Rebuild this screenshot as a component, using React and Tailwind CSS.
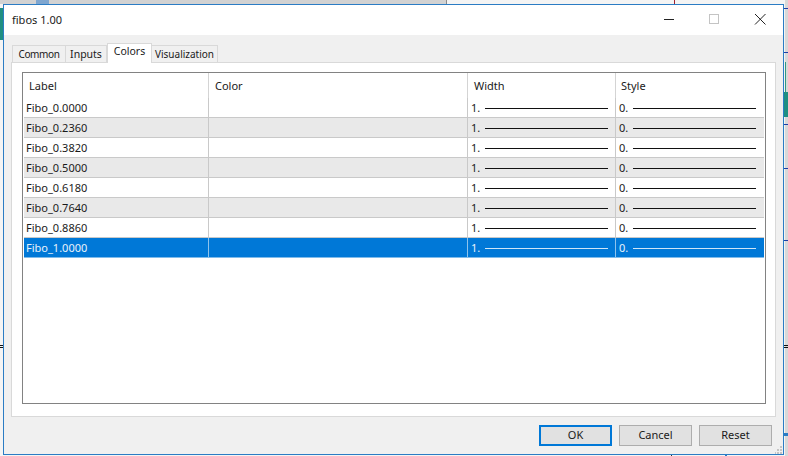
const rows = ["Fibo_0.0000","Fibo_0.2360","Fibo_0.3820","Fibo_0.5000","Fibo_0.6180","Fibo_0.7640","Fibo_0.8860","Fibo_1.0000"];

function Tab({ children, active, w }) {
  return (
    <div className={active
      ? "relative z-10 -mb-px h-[20px] flex items-start justify-center bg-white border border-b-0 border-[#d9d9d9] text-[10.5px] " + w
      : "mt-[2px] h-[18px] flex items-center justify-center bg-[#f0f0f0] border border-b-0 border-[#d9d9d9] -ml-px " + w}>
      {children}
    </div>
  );
}

function Row({ label, i }) {
  const sel = i === 7;
  const alt = i % 2 === 1;
  const bg = sel ? "bg-[#0078d7] text-[#e8f2fb]" : alt ? "bg-[#e9e9e9] text-[#1a1a1a]" : "bg-white text-[#1a1a1a]";
  const line = sel ? "bg-[#cfe6f8]" : "bg-[#111111]";
  const divider = sel ? "border-[#8fc3ec]" : "border-[#c9c9c9]";
  const rowBorder = sel ? "border-[#7fbbea]" : "border-[#c9c9c9]";
  return (
    <div className={"flex h-[20px] border-b " + rowBorder + " " + bg}>
      <div className={"w-[185px] pl-[2px] pt-[1px] border-r flex items-center " + divider}>{label}</div>
      <div className={"w-[259px] border-r " + divider}></div>
      <div className={"w-[148px] pl-[3px] pr-[7px] pt-[1px] border-r flex items-center gap-[5px] " + divider}>
        <span>1.</span><div className={"h-[1px] flex-1 " + line}></div>
      </div>
      <div className="flex-1 pl-[3px] pr-[8px] pt-[1px] flex items-center gap-[5px]">
        <span>0.</span><div className={"h-[1px] flex-1 " + line}></div>
      </div>
    </div>
  );
}

function Btn({ children, def }) {
  return (
    <div className={def
      ? "w-[73px] h-[21px] flex items-center justify-center bg-[#e1e1e1] border-2 border-[#0078d7] text-[#1a1a1a]"
      : "w-[73px] h-[21px] flex items-center justify-center bg-[#e1e1e1] border border-[#adadad] text-[#1a1a1a]"}>
      {children}
    </div>
  );
}

const backdropBits = [
  { k: "a", c: "left-0 top-0 w-[446px] h-[4px] bg-[#d2d2d2]" },
  { k: "b", c: "left-[446px] top-0 w-[1px] h-[4px] bg-[#8a8a8a]" },
  { k: "c", c: "left-[36px] top-0 w-[13px] h-[4px] bg-[#7fa6cf]" },
  { k: "d", c: "left-[674px] top-0 w-[1px] h-[4px] bg-[#a02030]" },
  { k: "e", c: "left-0 top-[8px] w-[3px] h-[32px] bg-[#1f8f82]" },
  { k: "f", c: "left-[785px] top-0 w-[3px] h-[456px] bg-[#d8d8d8]" },
  { k: "g", c: "left-[784px] top-[92px] w-[4px] h-[25px] bg-[#1f8f82]" },
  { k: "h", c: "left-[785px] top-[62px] w-[1px] h-[30px] bg-[#2f9a82]" },
  { k: "i", c: "left-[784px] top-[8px] w-[4px] h-[1px] bg-[#1c3fa8]" },
  { k: "j", c: "left-[784px] top-[52px] w-[4px] h-[1px] bg-[#1c3fa8]" },
  { k: "k", c: "left-[784px] top-[124px] w-[4px] h-[1px] bg-[#1c3fa8]" },
  { k: "l", c: "left-[784px] top-[168px] w-[4px] h-[1px] bg-[#1c3fa8]" },
  { k: "m", c: "left-[784px] top-[240px] w-[4px] h-[1px] bg-[#1c3fa8]" },
  { k: "n", c: "left-[784px] top-[345px] w-[4px] h-[1px] bg-[#111111]" },
  { k: "o", c: "left-[784px] top-[347px] w-[4px] h-[1px] bg-[#111111]" },
  { k: "p", c: "left-0 top-[345px] w-[3px] h-[1px] bg-[#111111]" },
  { k: "q", c: "left-0 top-[347px] w-[3px] h-[1px] bg-[#111111]" },
  { k: "r", c: "left-[784px] top-[433px] w-[4px] h-[3px] bg-[#2b7cc4]" },
  { k: "s", c: "left-[671px] top-[455px] w-[1px] h-[1px] bg-[#333333]" },
  { k: "t", c: "left-[725px] top-[455px] w-[2px] h-[1px] bg-[#2b7cc4]" },
];

export default function App() {
  return (
    <div className="relative w-[788px] h-[456px] overflow-hidden bg-[#f4f4f4] pl-[3px] pr-[4px] pt-[4px] text-[11px] font-['Noto_Sans',sans-serif]">
      {backdropBits.map(b => <div key={b.k} className={"absolute " + b.c}></div>)}
      <div className="relative w-[781px] h-[451px] flex flex-col bg-[#f0f0f0] border border-[#2b7cc4]">
        <div className="h-[30px] shrink-0 bg-white flex items-center pl-[8px] text-[#1a1a1a]">
          <span className="flex-1">fibos 1.00</span>
          <svg width="120" height="30" viewBox="0 0 120 30" fill="none" className="mr-[2px]">
            <path d="M3 14.5H13" stroke="#222" strokeWidth="1" />
            <rect x="48.5" y="9.5" width="9" height="9" stroke="#c4c4c4" />
            <path d="M94 9L104.5 19.5M104.5 9L94 19.5" stroke="#222" strokeWidth="1" />
          </svg>
        </div>
        <div className="flex-1 flex flex-col px-[7px] pt-[8px]">
          <div className="flex pl-[2px] h-[19px] text-[#1a1a1a]">
            <Tab w="w-[54px] text-[10px] tracking-[-0.4px]">Common</Tab>
            <Tab w="w-[42px] text-[10.5px]">Inputs</Tab>
            <Tab active w="w-[45px]">Colors</Tab>
            <Tab w="w-[67px] text-[10px]">Visualization</Tab>
          </div>
          <div className="h-[355px] bg-white border border-[#d9d9d9] pl-[10px] pr-[9px] pt-[9px]">
            <div className="h-[332px] border border-[#828282] bg-white px-[1px]">
              <div className="flex h-[25px] text-[#1a1a1a]">
                <div className="w-[185px] pl-[5px] pt-[1px] border-r border-[#d4d4d4] flex items-center">Label</div>
                <div className="w-[259px] pl-[6px] pt-[1px] border-r border-[#d4d4d4] flex items-center">Color</div>
                <div className="w-[148px] pl-[6px] pt-[1px] border-r border-[#d4d4d4] flex items-center">Width</div>
                <div className="flex-1 pl-[5px] pt-[1px] flex items-center">Style</div>
              </div>
              {rows.map((r, i) => <Row key={r} label={r} i={i} />)}
            </div>
          </div>
          <div className="flex justify-end gap-[7px] pr-[4px] pt-[8px]">
            <Btn def>OK</Btn>
            <Btn>Cancel</Btn>
            <Btn>Reset</Btn>
          </div>
        </div>
        <svg width="8" height="8" viewBox="0 0 8 8" className="absolute right-[0px] bottom-[0px]" fill="#c4c4c4">
          <rect x="5" y="0" width="2" height="2" />
          <rect x="2" y="3" width="2" height="2" />
          <rect x="5" y="3" width="2" height="2" />
          <rect x="-1" y="6" width="2" height="2" />
          <rect x="2" y="6" width="2" height="2" />
          <rect x="5" y="6" width="2" height="2" />
        </svg>
      </div>
    </div>
  );
}
